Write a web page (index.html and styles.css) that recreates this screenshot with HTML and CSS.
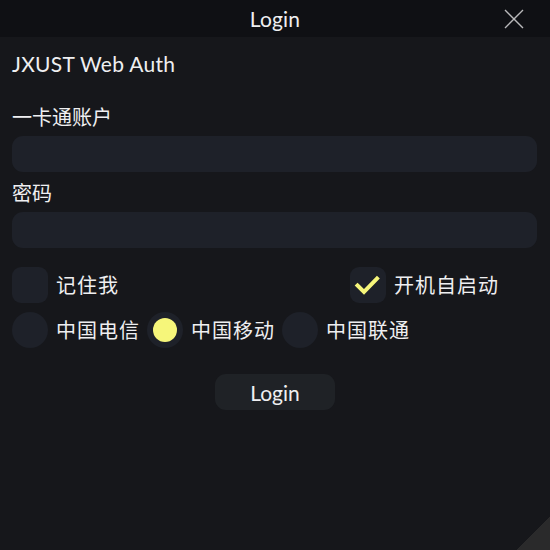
FILE: index.html
```html
<!DOCTYPE html>
<html lang="zh">
<head>
<meta charset="utf-8">
<title>Login</title>
<link rel="stylesheet" href="styles.css">
</head>
<body>
<div class="window">
  <header class="titlebar">
    <span class="title">Login</span>
    <span class="close">
      <svg width="22" height="22" viewBox="0 0 22 22"><path d="M2 2L20 20M20 2L2 20" stroke="#b9b9bb" stroke-width="1.4" fill="none"/></svg>
    </span>
  </header>
  <main class="content">
    <div class="heading">JXUST Web Auth</div>
    <div class="label first">一卡通账户</div>
    <div class="input"></div>
    <div class="label">密码</div>
    <div class="input"></div>
    <div class="row checks">
      <label class="opt"><span class="box"></span><span class="txt">记住我</span></label>
      <label class="opt"><span class="box">
        <svg width="36" height="36" viewBox="0 0 36 36"><path d="M7.5 18.5L14 25L27 11.5" stroke="#f6f67a" stroke-width="4" fill="none" stroke-linecap="square"/></svg>
      </span><span class="txt">开机自启动</span></label>
    </div>
    <div class="row radios">
      <label class="opt"><span class="radio"></span><span class="txt">中国电信</span></label>
      <label class="opt"><span class="radio on"><span class="dot"></span></span><span class="txt">中国移动</span></label>
      <label class="opt"><span class="radio"></span><span class="txt">中国联通</span></label>
    </div>
    <div class="actions"><button class="btn">Login</button></div>
  </main>
  <span class="grip"></span>
</div>
</body>
</html>
```
FILE: styles.css
```css
html, body { margin: 0; padding: 0; }
body {
  background: #16171b;
  color: #efeff1;
  font-family: Lato, "Noto Sans CJK SC", sans-serif;
  width: 550px;
  height: 550px;
  overflow: hidden;
}
.window { position: relative; width: 550px; height: 550px; }
.titlebar {
  height: 37px;
  background: #0f1014;
  display: flex;
  align-items: center;
  justify-content: center;
  position: relative;
}
.title { font-size: 21px; line-height: 37px; letter-spacing: 0.2px; }
.close { position: absolute; right: 25px; top: 8px; width: 22px; height: 22px; }
.content { padding: 0 13px 0 12px; }
.heading { margin-top: 13px; font-size: 21px; line-height: 28px; letter-spacing: 0.3px; }
.label { font-family: "Noto Sans CJK SC", sans-serif; font-size: 20px; line-height: 28px; margin-top: 7px; }
.label.first { margin-top: 25px; }
.input { height: 36px; border-radius: 11px; background: #1e2129; margin-top: 5px; }
.row { display: flex; align-items: center; }
.checks { margin-top: 19px; height: 36px; }
.checks .opt + .opt { margin-left: 231px; }
.radios { margin-top: 9px; height: 36px; gap: 7px; }
.opt { display: flex; align-items: center; gap: 8px; }
.txt { font-family: "Noto Sans CJK SC", sans-serif; font-size: 20px; line-height: 28px; letter-spacing: 1px; }
.box { width: 36px; height: 36px; border-radius: 9px; background: #1e2129; display: block; }
.box svg { display: block; }
.radio { width: 36px; height: 36px; border-radius: 50%; background: #1e2129; display: flex; align-items: center; justify-content: center; }
.dot { width: 24px; height: 24px; border-radius: 50%; background: #f6f67a; }
.actions { display: flex; justify-content: center; margin-top: 26px; padding-left: 1px; }
.btn {
  width: 120px; height: 36px; border: none; border-radius: 11px;
  background: #1f2226; color: #efeff1;
  font-family: Lato, sans-serif; font-size: 21px; padding: 0;
}
.grip {
  position: absolute; right: 0; bottom: 0; width: 33px; height: 33px;
  background: linear-gradient(135deg, transparent 50%, #2a2a2b 50%);
}
```
